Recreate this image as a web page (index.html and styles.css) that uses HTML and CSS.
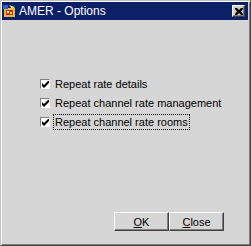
FILE: index.html
```html
<!DOCTYPE html>
<html>
<head>
<meta charset="utf-8">
<link rel="stylesheet" href="styles.css">
</head>
<body>
<div class="window">
  <div class="titlebar">
    <svg class="appicon" width="14" height="14" viewBox="0 0 14 14">
      <rect x="1" y="4" width="11" height="9" fill="#e8b838"/>
      <rect x="3" y="6" width="7" height="5" fill="#c83020"/>
      <rect x="0" y="1" width="5" height="4" fill="#3060c8"/>
      <path d="M6 1 L12 3 L9 5 Z" fill="#f0e060"/>
      <rect x="4" y="7" width="2" height="2" fill="#fff"/>
      <rect x="7" y="8" width="2" height="2" fill="#ffe000"/>
    </svg>
    <span class="title">AMER - Options</span>
    <div class="closebtn">
      <svg width="8" height="7" viewBox="0 0 8 7">
        <path d="M0 0h2l2 2 2-2h2v1l-2 2.5 2 2.5v1h-2l-2-2-2 2h-2v-1l2-2.5-2-2.5z" fill="#000"/>
      </svg>
    </div>
  </div>
  <div class="client">
    <div class="options">
      <label class="row"><span class="cb"><svg width="7" height="7" viewBox="0 0 7 7"><path d="M0 2v3l2 2 5-5v-3l-5 5z" fill="#000"/></svg></span><span class="text">Repeat rate details</span></label>
      <label class="row"><span class="cb"><svg width="7" height="7" viewBox="0 0 7 7"><path d="M0 2v3l2 2 5-5v-3l-5 5z" fill="#000"/></svg></span><span class="text">Repeat channel rate management</span></label>
      <label class="row"><span class="cb"><svg width="7" height="7" viewBox="0 0 7 7"><path d="M0 2v3l2 2 5-5v-3l-5 5z" fill="#000"/></svg></span><span class="text focus">Repeat channel rate rooms</span></label>
    </div>
    <div class="buttons">
      <div class="btn"><span class="u">O</span>K</div>
      <div class="btn"><span class="u">C</span>lose</div>
    </div>
  </div>
</div>
</body>
</html>
```
FILE: styles.css
```css
html, body {
  margin: 0;
  padding: 0;
  background: #d4d4d4;
}
.window {
  width: 251px;
  height: 246px;
  box-sizing: border-box;
  background: #d6d6d6;
  border-top: 1px solid #c0c0c0;
  border-left: 1px solid #c0c0c0;
  border-right: 1px solid #404040;
  border-bottom: 1px solid #404040;
  box-shadow: inset 1px 1px 0 #ffffff, inset -1px -1px 0 #808080;
  padding: 1px 2px 2px 1px;
  display: flex;
  flex-direction: column;
  font-family: "Liberation Sans", Arial, sans-serif;
}
.titlebar {
  height: 18px;
  background: #0c2068;
  display: flex;
  align-items: center;
  padding: 0 3px 0 1px;
  color: #fff;
}
.appicon {
  margin-right: 2px;
}
.title {
  font-size: 12px;
  flex: 1;
}
.closebtn {
  width: 13px;
  height: 12px;
  box-sizing: border-box;
  background: #d4d0c8;
  border-top: 1px solid #fff;
  border-left: 1px solid #fff;
  border-right: 1px solid #404040;
  border-bottom: 1px solid #404040;
  box-shadow: inset -1px -1px 0 #808080;
  display: flex;
  align-items: center;
  justify-content: center;
}
.client {
  flex: 1;
  display: flex;
  flex-direction: column;
}
.options {
  padding: 56px 0 0 38px;
  display: flex;
  flex-direction: column;
  gap: 3px;
}
.row {
  display: flex;
  align-items: center;
  height: 16px;
  font-size: 11px;
  color: #000;
}
.cb {
  width: 10px;
  height: 10px;
  box-sizing: border-box;
  background: #fff;
  border-top: 1px solid #808080;
  border-left: 1px solid #808080;
  border-right: 1px solid #fff;
  border-bottom: 1px solid #fff;
  display: flex;
  align-items: center;
  justify-content: center;
  margin-right: 3px;
}
.cb svg {
  display: block;
}
.text {
  padding: 1px 1px;
  border: 1px solid transparent;
}
.text.focus {
  border: 1px dotted #000;
}
.buttons {
  margin-top: auto;
  margin-bottom: 12px;
  display: flex;
  justify-content: flex-end;
  padding-right: 24px;
}
.btn {
  width: 55px;
  height: 19px;
  box-sizing: border-box;
  background: #d6d6d6;
  border-top: 1px solid #fff;
  border-left: 1px solid #fff;
  border-right: 1px solid #404040;
  border-bottom: 1px solid #404040;
  box-shadow: inset -1px -1px 0 #808080;
  display: flex;
  align-items: center;
  justify-content: center;
  font-size: 11px;
  color: #000;
}
.u {
  text-decoration: underline;
}
```
